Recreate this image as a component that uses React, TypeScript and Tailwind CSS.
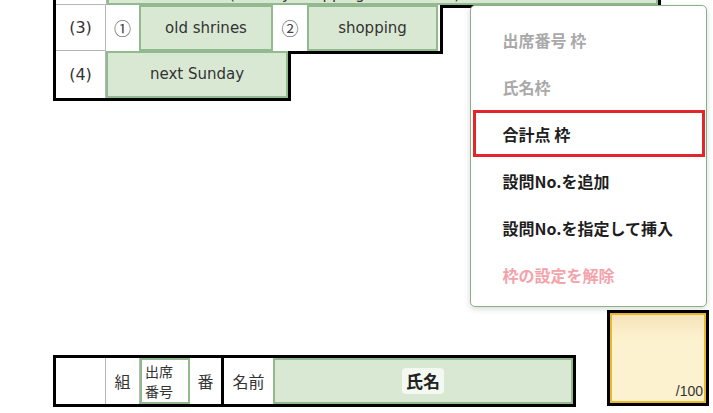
import React from "react";

const latin = { fontFamily: '"DejaVu Sans", "Noto Sans CJK JP", sans-serif' };
const jp = { fontFamily: '"Noto Sans CJK JP", "Noto Sans", sans-serif' };

const menuItems: { label: string; tone: "gray" | "black" | "pink"; selected?: boolean }[] = [
  { label: "出席番号 枠", tone: "gray" },
  { label: "氏名枠", tone: "gray" },
  { label: "合計点 枠", tone: "black", selected: true },
  { label: "設問No.を追加", tone: "black" },
  { label: "設問No.を指定して挿入", tone: "black" },
  { label: "枠の設定を解除", tone: "pink" },
];

export default function App() {
  return (
    <div className="relative w-[713px] h-[413px] bg-white overflow-hidden flex flex-col text-[#333]" style={latin}>
      {/* top table */}
      <div className="ml-[53px] flex flex-col">
        {/* row 1 (clipped) */}
        <div className="flex h-[5px] w-[608px] border-l-[3px] border-r-[3px] border-black overflow-hidden">
          <div className="w-[51px] shrink-0 border-r border-b border-[#b5b5b5] bg-white" />
          <div className="flex-1 bg-[#d9e8d3] border-x-2 border-b-2 border-[#93ba8e] overflow-hidden flex justify-start pl-[120px]">
            <div className="text-[15px] leading-[18px] -mt-[15px] whitespace-nowrap">(Sunday/shopping in the town)</div>
          </div>
        </div>
        {/* row 3 */}
        <div className="flex">
          <div className="flex h-[46px] w-[390px] border-l-[3px] border-r-[3px] border-black bg-white">
            <div className="w-[50px] shrink-0 border-r border-b border-[#b5b5b5] flex items-center justify-center text-[16px]">(3)</div>
            <div className="w-[33px] shrink-0 flex items-center justify-center text-[17px] text-[#444]" style={jp}>①</div>
            <div className="w-[134px] shrink-0 bg-[#d9e8d3] border-2 border-[#93ba8e] flex items-center justify-center text-[15px]">old shrines</div>
            <div className="w-[34px] shrink-0 flex items-center justify-center text-[17px] text-[#444]" style={jp}>②</div>
            <div className="w-[131px] shrink-0 bg-[#d9e8d3] border-2 border-[#93ba8e] flex items-center justify-center text-[15px]">shopping</div>
          </div>
          <div className="w-[218px] h-[3px] bg-black" />
        </div>
        {/* row 4 */}
        <div className="flex">
          <div className="flex h-[50px] w-[238px] border-l-[3px] border-r-[3px] border-b-[3px] border-black bg-white">
            <div className="w-[50px] shrink-0 border-r border-[#b5b5b5] flex items-center justify-center text-[16px]">(4)</div>
            <div className="flex-1 bg-[#d9e8d3] border-2 border-[#93ba8e] flex items-center justify-center text-[15px]">next Sunday</div>
          </div>
          <div className="-ml-[3px] w-[155px] h-[3px] bg-black" />
        </div>
      </div>

      {/* bottom row */}
      <div className="ml-[53px] mt-[209px] flex items-start gap-[31px]">
        <div className="mt-[45px] flex h-[52px] w-[523px] border-[3px] border-black bg-white" style={jp}>
          <div className="w-[50px] shrink-0 border-r border-[#b5b5b5]" />
          <div className="w-[34px] shrink-0 border-r border-[#b5b5b5] flex items-center justify-center text-[16px]">組</div>
          <div className="w-[50px] shrink-0 bg-white border-2 border-[#93ba8e] flex flex-col justify-center pl-[3px] text-[14px] leading-[20px]">
            <span>出席</span>
            <span>番号</span>
          </div>
          <div className="w-[31px] shrink-0 flex items-center justify-center text-[16px]">番</div>
          <div className="w-[3px] shrink-0 bg-black" />
          <div className="w-[49px] shrink-0 flex items-center justify-center text-[16px]">名前</div>
          <div className="flex-1 bg-[#d9e8d3] border-2 border-[#93ba8e] flex items-center justify-center">
            <span className="px-1 rounded bg-[#f3f8f1] text-[17px] font-bold text-[#222]">氏名</span>
          </div>
        </div>
        <div className="w-[102px] h-[96px] border-[3px] border-black">
          <div className="w-full h-full border-2 border-[#e8b929] bg-gradient-to-b from-[#f6e5bd] to-[#fdf2cf] to-[30%] flex items-end justify-end pr-[1px] pb-[2px]">
            <span className="text-[14px] leading-[16px] text-[#333]" style={{ fontFamily: '"Liberation Sans", sans-serif' }}>/100</span>
          </div>
        </div>
      </div>

      {/* context menu */}
      <div
        className="absolute left-[470px] top-[5px] w-[237px] h-[302px] bg-white border-[1.5px] border-[#86b383] rounded-[5px] shadow-[0_2px_6px_rgba(0,0,0,0.15)] pt-[10px] z-10"
        style={jp}
      >
        {menuItems.map((it) => (
          <div
            key={it.label}
            className={
              "mx-[1.5px] h-[47px] flex items-center pl-[27px] text-[16px] font-bold border-[3px] " +
              (it.selected ? "border-[#e3262b] " : "border-transparent ") +
              (it.tone === "gray" ? "text-[#a9a9a9]" : it.tone === "pink" ? "text-[#f4a2aa]" : "text-[#1e1e1e]")
            }
          >
            {it.label}
          </div>
        ))}
      </div>
    </div>
  );
}
